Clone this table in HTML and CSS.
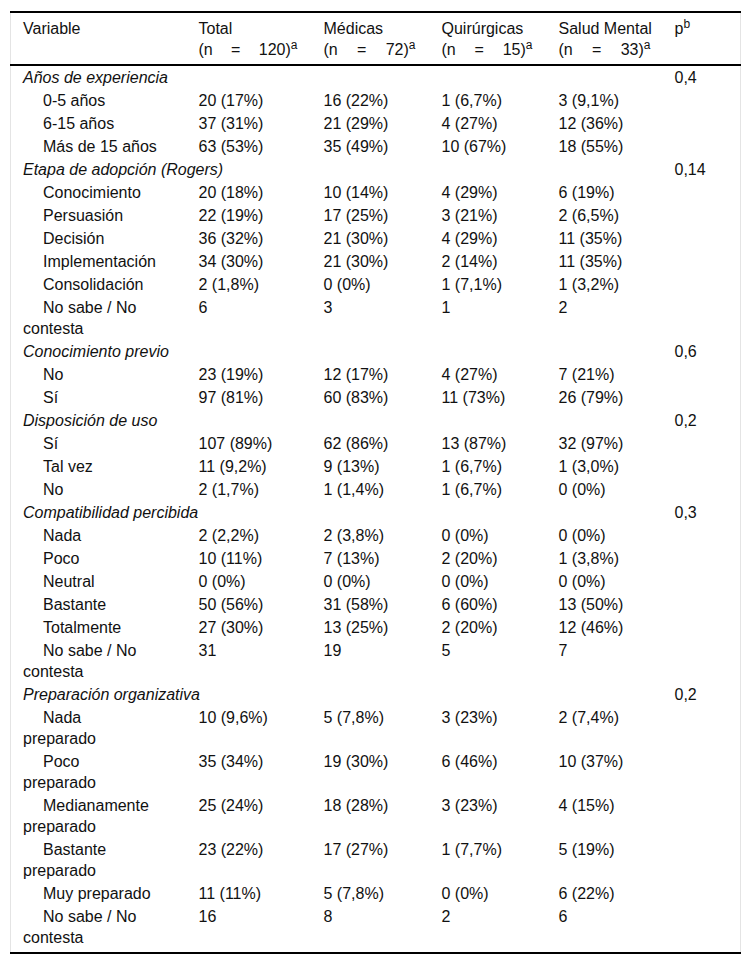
FILE: index.html
```html
<!DOCTYPE html>
<html lang="es">
<head>
<meta charset="utf-8">
<link rel="stylesheet" href="styles.css">
</head>
<body>
<div class="wrap">
<table class="tbl">
<colgroup>
<col class="c1"><col class="c2"><col class="c3"><col class="c4"><col class="c5"><col class="c6">
</colgroup>
<thead>
<tr>
<th>Variable</th>
<th>Total<span class="n">(n = 120)<sup>a</sup></span></th>
<th>Médicas<span class="n">(n = 72)<sup>a</sup></span></th>
<th>Quirúrgicas<span class="n">(n = 15)<sup>a</sup></span></th>
<th class="nowrap">Salud Mental<span class="n">(n = 33)<sup>a</sup></span></th>
<th>p<sup>b</sup></th>
</tr>
</thead>
<tbody>
<tr class="cat"><td colspan="5">Años de experiencia</td><td class="p">0,4</td></tr>
<tr><td class="ind">0-5 años</td><td>20 (17%)</td><td>16 (22%)</td><td>1 (6,7%)</td><td>3 (9,1%)</td><td></td></tr>
<tr><td class="ind">6-15 años</td><td>37 (31%)</td><td>21 (29%)</td><td>4 (27%)</td><td>12 (36%)</td><td></td></tr>
<tr><td class="ind">Más de 15 años</td><td>63 (53%)</td><td>35 (49%)</td><td>10 (67%)</td><td>18 (55%)</td><td></td></tr>
<tr class="cat"><td colspan="5">Etapa de adopción (Rogers)</td><td class="p">0,14</td></tr>
<tr><td class="ind">Conocimiento</td><td>20 (18%)</td><td>10 (14%)</td><td>4 (29%)</td><td>6 (19%)</td><td></td></tr>
<tr><td class="ind">Persuasión</td><td>22 (19%)</td><td>17 (25%)</td><td>3 (21%)</td><td>2 (6,5%)</td><td></td></tr>
<tr><td class="ind">Decisión</td><td>36 (32%)</td><td>21 (30%)</td><td>4 (29%)</td><td>11 (35%)</td><td></td></tr>
<tr><td class="ind">Implementación</td><td>34 (30%)</td><td>21 (30%)</td><td>2 (14%)</td><td>11 (35%)</td><td></td></tr>
<tr><td class="ind">Consolidación</td><td>2 (1,8%)</td><td>0 (0%)</td><td>1 (7,1%)</td><td>1 (3,2%)</td><td></td></tr>
<tr><td class="ind">No sabe / No<br>contesta</td><td>6</td><td>3</td><td>1</td><td>2</td><td></td></tr>
<tr class="cat"><td colspan="5">Conocimiento previo</td><td class="p">0,6</td></tr>
<tr><td class="ind">No</td><td>23 (19%)</td><td>12 (17%)</td><td>4 (27%)</td><td>7 (21%)</td><td></td></tr>
<tr><td class="ind">Sí</td><td>97 (81%)</td><td>60 (83%)</td><td>11 (73%)</td><td>26 (79%)</td><td></td></tr>
<tr class="cat"><td colspan="5">Disposición de uso</td><td class="p">0,2</td></tr>
<tr><td class="ind">Sí</td><td>107 (89%)</td><td>62 (86%)</td><td>13 (87%)</td><td>32 (97%)</td><td></td></tr>
<tr><td class="ind">Tal vez</td><td>11 (9,2%)</td><td>9 (13%)</td><td>1 (6,7%)</td><td>1 (3,0%)</td><td></td></tr>
<tr><td class="ind">No</td><td>2 (1,7%)</td><td>1 (1,4%)</td><td>1 (6,7%)</td><td>0 (0%)</td><td></td></tr>
<tr class="cat"><td colspan="5">Compatibilidad percibida</td><td class="p">0,3</td></tr>
<tr><td class="ind">Nada</td><td>2 (2,2%)</td><td>2 (3,8%)</td><td>0 (0%)</td><td>0 (0%)</td><td></td></tr>
<tr><td class="ind">Poco</td><td>10 (11%)</td><td>7 (13%)</td><td>2 (20%)</td><td>1 (3,8%)</td><td></td></tr>
<tr><td class="ind">Neutral</td><td>0 (0%)</td><td>0 (0%)</td><td>0 (0%)</td><td>0 (0%)</td><td></td></tr>
<tr><td class="ind">Bastante</td><td>50 (56%)</td><td>31 (58%)</td><td>6 (60%)</td><td>13 (50%)</td><td></td></tr>
<tr><td class="ind">Totalmente</td><td>27 (30%)</td><td>13 (25%)</td><td>2 (20%)</td><td>12 (46%)</td><td></td></tr>
<tr><td class="ind">No sabe / No<br>contesta</td><td>31</td><td>19</td><td>5</td><td>7</td><td></td></tr>
<tr class="cat"><td colspan="5">Preparación organizativa</td><td class="p">0,2</td></tr>
<tr><td class="ind">Nada<br>preparado</td><td>10 (9,6%)</td><td>5 (7,8%)</td><td>3 (23%)</td><td>2 (7,4%)</td><td></td></tr>
<tr><td class="ind">Poco<br>preparado</td><td>35 (34%)</td><td>19 (30%)</td><td>6 (46%)</td><td>10 (37%)</td><td></td></tr>
<tr><td class="ind">Medianamente<br>preparado</td><td>25 (24%)</td><td>18 (28%)</td><td>3 (23%)</td><td>4 (15%)</td><td></td></tr>
<tr><td class="ind">Bastante<br>preparado</td><td>23 (22%)</td><td>17 (27%)</td><td>1 (7,7%)</td><td>5 (19%)</td><td></td></tr>
<tr><td class="ind">Muy preparado</td><td>11 (11%)</td><td>5 (7,8%)</td><td>0 (0%)</td><td>6 (22%)</td><td></td></tr>
<tr><td class="ind">No sabe / No<br>contesta</td><td>16</td><td>8</td><td>2</td><td>6</td><td></td></tr>
</tbody>
</table>
</div>
</body>
</html>
```
FILE: styles.css
```css
html, body {
  margin: 0;
  padding: 0;
  background: #fff;
}
.wrap {
  padding: 11px 10px 0 10px;
}
.tbl {
  width: 731px;
  table-layout: fixed;
  border-collapse: collapse;
  font-family: "Liberation Sans", Arial, sans-serif;
  font-size: 16px;
  color: #111;
  border-top: 2px solid #000;
  border-bottom: 2px solid #000;
  border-left: 1px solid #e4e4e4;
  border-right: 1px solid #e4e4e4;
}
.c1 { width: 176px; }
.c2 { width: 125px; }
.c3 { width: 118px; }
.c4 { width: 117px; }
.c5 { width: 116px; }
.c6 { width: 78px; }
.tbl th {
  font-weight: normal;
  text-align: left;
  vertical-align: top;
  line-height: 21px;
  padding: 5px 8px 4px 12px;
  border-bottom: 2px solid #000;
}
.tbl th.nowrap {
  white-space: nowrap;
}
.tbl th .n {
  display: block;
  white-space: normal;
  text-align: justify;
  text-align-last: justify;
  margin-right: 6px;
}
.tbl th.nowrap .n {
  margin-right: 4px;
}
.tbl sup {
  font-size: 12px;
  line-height: 0;
  vertical-align: 6px;
}
.tbl td {
  vertical-align: top;
  line-height: 21px;
  padding: 1px 8px 1px 12px;
}
.tbl td.ind {
  text-indent: 20px;
}
.tbl tr.cat td {
  font-style: italic;
}
.tbl tr.cat td.p {
  font-style: normal;
}
.tbl tbody tr:last-child td {
  padding-bottom: 4px;
}
```
